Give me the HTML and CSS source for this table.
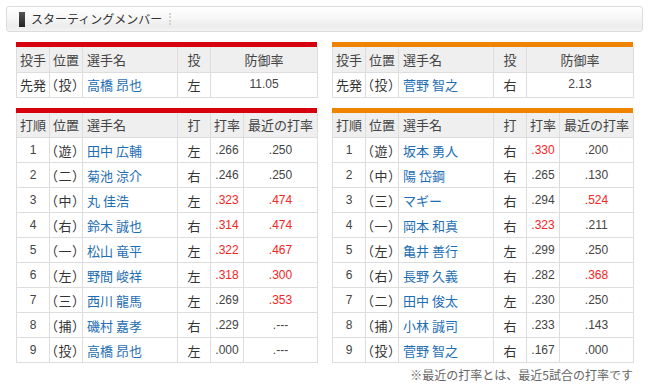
FILE: index.html
```html
<!DOCTYPE html>
<html lang="ja">
<head>
<meta charset="utf-8">
<title>スターティングメンバー</title>
<link rel="stylesheet" href="styles.css">
</head>
<body>
<div class="page">
  <div class="heading">
    <span class="heading-mark"></span>
    <h2 class="heading-title">スターティングメンバー</h2>
    <span class="heading-sep"></span>
  </div>

  <div class="teams">
    <section class="team team-carp">
      <div class="bar">
        <table class="grid">
          <colgroup><col class="c1"><col class="c2"><col class="c3"><col class="c4"><col class="c57"></colgroup>
          <tr><th class="l">投手</th><th class="l">位置</th><th class="l name-h">選手名</th><th>投</th><th>防御率</th></tr>
          <tr><td class="l">先発</td><td class="pos">（投）</td><td class="name"><a>高橋 昂也</a></td><td class="hand">左</td><td class="num">11.05</td></tr>
        </table>
      </div>
      <div class="bar">
        <table class="grid">
          <colgroup><col class="c1"><col class="c2"><col class="c3"><col class="c4"><col class="c5"><col class="c6"></colgroup>
          <tr><th>打順</th><th class="l">位置</th><th class="l name-h">選手名</th><th>打</th><th>打率</th><th>最近の打率</th></tr>
          <tr><td class="num">1</td><td class="pos">（遊）</td><td class="name"><a>田中 広輔</a></td><td class="hand">左</td><td class="num">.266</td><td class="num">.250</td></tr>
          <tr><td class="num">2</td><td class="pos">（二）</td><td class="name"><a>菊池 涼介</a></td><td class="hand">右</td><td class="num">.246</td><td class="num">.250</td></tr>
          <tr><td class="num">3</td><td class="pos">（中）</td><td class="name"><a>丸 佳浩</a></td><td class="hand">左</td><td class="num hot">.323</td><td class="num hot">.474</td></tr>
          <tr><td class="num">4</td><td class="pos">（右）</td><td class="name"><a>鈴木 誠也</a></td><td class="hand">右</td><td class="num hot">.314</td><td class="num hot">.474</td></tr>
          <tr><td class="num">5</td><td class="pos">（一）</td><td class="name"><a>松山 竜平</a></td><td class="hand">左</td><td class="num hot">.322</td><td class="num hot">.467</td></tr>
          <tr><td class="num">6</td><td class="pos">（左）</td><td class="name"><a>野間 峻祥</a></td><td class="hand">左</td><td class="num hot">.318</td><td class="num hot">.300</td></tr>
          <tr><td class="num">7</td><td class="pos">（三）</td><td class="name"><a>西川 龍馬</a></td><td class="hand">左</td><td class="num">.269</td><td class="num hot">.353</td></tr>
          <tr><td class="num">8</td><td class="pos">（捕）</td><td class="name"><a>磯村 嘉孝</a></td><td class="hand">右</td><td class="num">.229</td><td class="num">.---</td></tr>
          <tr><td class="num">9</td><td class="pos">（投）</td><td class="name"><a>高橋 昂也</a></td><td class="hand">左</td><td class="num">.000</td><td class="num">.---</td></tr>
        </table>
      </div>
    </section>

    <section class="team team-giants">
      <div class="bar">
        <table class="grid">
          <colgroup><col class="c1"><col class="c2"><col class="c3"><col class="c4"><col class="c57"></colgroup>
          <tr><th class="l">投手</th><th class="l">位置</th><th class="l name-h">選手名</th><th>投</th><th>防御率</th></tr>
          <tr><td class="l">先発</td><td class="pos">（投）</td><td class="name"><a>菅野 智之</a></td><td class="hand">右</td><td class="num">2.13</td></tr>
        </table>
      </div>
      <div class="bar">
        <table class="grid">
          <colgroup><col class="c1"><col class="c2"><col class="c3"><col class="c4"><col class="c5"><col class="c6"></colgroup>
          <tr><th>打順</th><th class="l">位置</th><th class="l name-h">選手名</th><th>打</th><th>打率</th><th>最近の打率</th></tr>
          <tr><td class="num">1</td><td class="pos">（遊）</td><td class="name"><a>坂本 勇人</a></td><td class="hand">右</td><td class="num hot">.330</td><td class="num">.200</td></tr>
          <tr><td class="num">2</td><td class="pos">（中）</td><td class="name"><a>陽 岱鋼</a></td><td class="hand">右</td><td class="num">.265</td><td class="num">.130</td></tr>
          <tr><td class="num">3</td><td class="pos">（三）</td><td class="name"><a>マギー</a></td><td class="hand">右</td><td class="num">.294</td><td class="num hot">.524</td></tr>
          <tr><td class="num">4</td><td class="pos">（一）</td><td class="name"><a>岡本 和真</a></td><td class="hand">右</td><td class="num hot">.323</td><td class="num">.211</td></tr>
          <tr><td class="num">5</td><td class="pos">（左）</td><td class="name"><a>亀井 善行</a></td><td class="hand">左</td><td class="num">.299</td><td class="num">.250</td></tr>
          <tr><td class="num">6</td><td class="pos">（右）</td><td class="name"><a>長野 久義</a></td><td class="hand">右</td><td class="num">.282</td><td class="num hot">.368</td></tr>
          <tr><td class="num">7</td><td class="pos">（二）</td><td class="name"><a>田中 俊太</a></td><td class="hand">左</td><td class="num">.230</td><td class="num">.250</td></tr>
          <tr><td class="num">8</td><td class="pos">（捕）</td><td class="name"><a>小林 誠司</a></td><td class="hand">右</td><td class="num">.233</td><td class="num">.143</td></tr>
          <tr><td class="num">9</td><td class="pos">（投）</td><td class="name"><a>菅野 智之</a></td><td class="hand">右</td><td class="num">.167</td><td class="num">.000</td></tr>
        </table>
      </div>
    </section>
  </div>

  <p class="note">※最近の打率とは、最近5試合の打率です</p>
</div>
</body>
</html>
```

FILE: styles.css
```css
* { box-sizing: border-box; }

body {
  margin: 0;
  background: #fff;
  font-family: "Noto Sans CJK JP", "Noto Sans", sans-serif;
  color: #333;
}

.page {
  padding: 6px 7px 0 6px;
}

.heading {
  display: flex;
  align-items: center;
  height: 26px;
  border: 1px solid #dcdcdc;
  border-radius: 3px;
  background: linear-gradient(#ffffff 0%, #f7f7f7 45%, #ececec 80%, #f3f3f3 100%);
  padding-left: 12px;
}

.heading-mark {
  width: 6px;
  height: 15px;
  background: linear-gradient(#555, #222);
}

.heading-title {
  margin: 0 0 0 6px;
  font-size: 12px;
  font-weight: normal;
  color: #333;
  line-height: 24px;
}

.heading-sep {
  width: 0;
  height: 12px;
  margin-left: 7px;
  border-left: 2px dotted #d4d4d4;
}

.teams {
  display: flex;
  gap: 15px;
  padding: 10px 10px 0 10px;
}

.team {
  width: 301px;
}

.bar + .bar {
  margin-top: 10px;
}

.team-carp .bar { border-top: 5px solid #d7000f; }
.team-giants .bar { border-top: 5px solid #f08300; }

.grid {
  width: 301px;
  table-layout: fixed;
  border-collapse: collapse;
}

.c1, .c2, .c4, .c5 { width: 33px; }
.c3 { width: 95px; }
.c6 { width: 74px; }
.c57 { width: 107px; }

.grid th,
.grid td {
  border: 1px solid #dddddd;
  padding: 0;
  height: 25px;
  line-height: 23px;
  font-size: 13px;
  font-weight: normal;
  text-align: center;
  white-space: nowrap;
  overflow: hidden;
}

.grid tr:first-child th { border-top: 0; }

.grid th {
  background: #efefef;
  color: #444;
}

.grid td { background: #fff; color: #333; }

.grid .l { text-align: left; padding-left: 3px; }
.grid .name-h { padding-left: 4px; }

.grid .pos {
  text-align: left;
  padding-left: 1px;
  font-feature-settings: "palt";
  letter-spacing: 1px;
}

.grid .name { text-align: left; padding-left: 4px; }
.grid .name a { color: #1e6eb4; text-decoration: none; }

.grid .num {
  font-family: "Liberation Sans", Arial, sans-serif;
  font-size: 12px;
  color: #444;
}

.grid .num.hot { color: #f32525; }

.note {
  margin: 4px 10px 0 0;
  text-align: right;
  font-size: 12px;
  line-height: 16px;
  color: #666;
}
```
